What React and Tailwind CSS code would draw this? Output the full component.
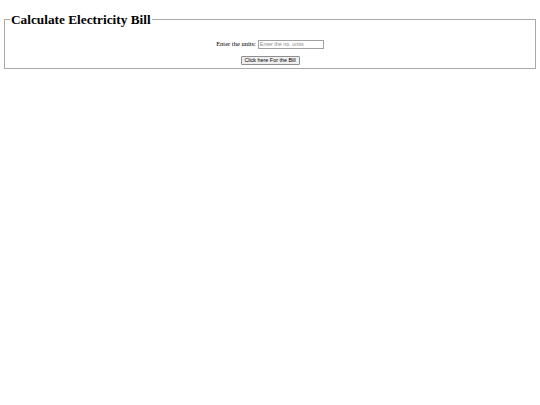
export default function App() {
  return (
    <div className="min-h-[405px] w-[540px] bg-white px-[3px] pt-[3px]">
      <fieldset className="mx-[1px] border border-[#a9a9a9] px-[5px] pb-[3px]">
        <legend className="px-[1px]">
          <h1 className="my-[9px] text-[13.3px] font-bold leading-[15.5px] text-black [font-family:'Liberation_Serif',serif]">
            Calculate Electricity Bill
          </h1>
        </legend>
        <div className="flex flex-col items-center pt-[3px]">
          <div className="flex items-center gap-[2px]">
            <span className="text-[6.5px] leading-[8px] text-black [font-family:'Liberation_Serif',serif]">
              Enter the units:
            </span>
            <input
              type="text"
              placeholder="Enter the no. units"
              className="h-[9px] w-[66px] border border-[#a0a0a0] px-[1px] text-[5.4px] leading-[7px] outline-none placeholder:text-[#8a8a8a] [font-family:'Liberation_Sans',sans-serif]"
            />
          </div>
          <button
            type="button"
            className="mt-[7px] h-[9px] w-[59px] rounded-[1px] border border-[#8f8f8f] bg-[#efefef] text-[5.4px] leading-[7px] text-black [font-family:'Liberation_Sans',sans-serif]"
          >
            Click here For the Bill
          </button>
        </div>
      </fieldset>
    </div>
  );
}
